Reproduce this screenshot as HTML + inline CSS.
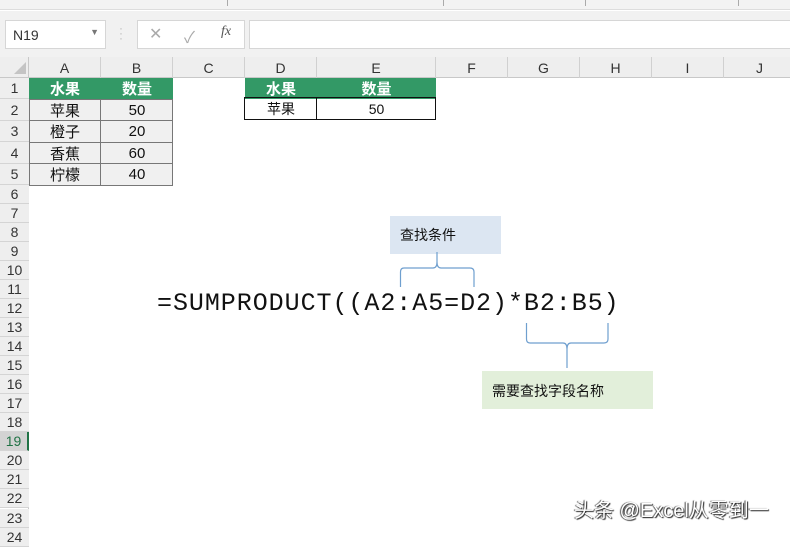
<!DOCTYPE html>
<html><head><meta charset="utf-8"><style>
*{margin:0;padding:0;box-sizing:border-box}
body{width:790px;height:534px;overflow:hidden;background:#fff;position:relative;font-family:"Liberation Sans","Noto Sans CJK SC",sans-serif}
.a{position:absolute}
.cell{position:absolute;display:flex;align-items:center;justify-content:center;font-size:15px;color:#111}
.ch{position:absolute;top:57px;height:21px;display:flex;align-items:center;justify-content:center;font-size:14px;color:#333;border-right:1px solid #d0d0d0}
.rh{position:absolute;left:0;width:29px;display:flex;align-items:center;justify-content:center;font-size:14px;color:#333;border-bottom:1px solid #d4d4d4;background:#eeeeee}
</style></head><body>
<div class="a" style="left:0;top:0;width:790px;height:10px;background:#f3f3f3;border-bottom:1px solid #ddd"></div>
<div class="a" style="left:227px;top:0;width:1px;height:6px;background:#aaa"></div>
<div class="a" style="left:443px;top:0;width:1px;height:6px;background:#aaa"></div>
<div class="a" style="left:585px;top:0;width:1px;height:6px;background:#aaa"></div>
<div class="a" style="left:738px;top:0;width:1px;height:6px;background:#aaa"></div>
<div class="a" style="left:0;top:11px;width:790px;height:46px;background:#f1f1f1"></div>
<div class="a" style="left:5px;top:20px;width:101px;height:29px;background:#fff;border:1px solid #d6d6d6;font-size:14px;color:#333;padding:6px 0 0 7px">N19<span style="position:absolute;right:6px;top:6px;font-size:9px;color:#777">▼</span></div>
<div class="a" style="left:119px;top:26px;font-size:12px;color:#bbb;line-height:5px">·<br>·<br>·</div>
<div class="a" style="left:137px;top:20px;width:108px;height:29px;background:#fff;border:1px solid #d6d6d6"></div>
<div class="a" style="left:149px;top:24px;font-size:16px;color:#aaa">✕</div>
<div class="a" style="left:184px;top:24px;font-size:16px;color:#aaa">✓</div>
<div class="a" style="left:221px;top:24px;font-size:14px;color:#555;font-style:italic;font-family:'Liberation Serif',serif">fx</div>
<div class="a" style="left:249px;top:20px;width:545px;height:29px;background:#fff;border:1px solid #d6d6d6"></div>
<div class="a" style="left:0;top:57px;width:790px;height:21px;background:#eeeeee;border-bottom:1px solid #c8c8c8"></div>
<div class="a" style="left:14px;top:62px;width:0;height:0;border-left:12px solid transparent;border-bottom:12px solid #c4c4c4"></div>
<div class="ch" style="left:29px;width:72px">A</div>
<div class="ch" style="left:101px;width:72px">B</div>
<div class="ch" style="left:173px;width:72px">C</div>
<div class="ch" style="left:245px;width:72px">D</div>
<div class="ch" style="left:317px;width:119px">E</div>
<div class="ch" style="left:436px;width:72px">F</div>
<div class="ch" style="left:508px;width:72px">G</div>
<div class="ch" style="left:580px;width:72px">H</div>
<div class="ch" style="left:652px;width:72px">I</div>
<div class="ch" style="left:724px;width:72px">J</div>
<div class="a" style="left:28px;top:57px;width:1px;height:477px;background:#c8c8c8"></div>
<div class="rh" style="top:78px;height:21px">1</div>
<div class="rh" style="top:99px;height:22px">2</div>
<div class="rh" style="top:121px;height:21px">3</div>
<div class="rh" style="top:142px;height:22px">4</div>
<div class="rh" style="top:164px;height:21px">5</div>
<div class="rh" style="top:185px;height:19px">6</div>
<div class="rh" style="top:204px;height:19px">7</div>
<div class="rh" style="top:223px;height:19px">8</div>
<div class="rh" style="top:242px;height:19px">9</div>
<div class="rh" style="top:261px;height:19px">10</div>
<div class="rh" style="top:280px;height:19px">11</div>
<div class="rh" style="top:299px;height:19px">12</div>
<div class="rh" style="top:318px;height:19px">13</div>
<div class="rh" style="top:337px;height:19px">14</div>
<div class="rh" style="top:356px;height:19px">15</div>
<div class="rh" style="top:375px;height:19px">16</div>
<div class="rh" style="top:394px;height:19px">17</div>
<div class="rh" style="top:413px;height:19px">18</div>
<div class="rh" style="top:432px;height:19px;background:#d3d3d3;color:#217346;border-right:2px solid #217346">19</div>
<div class="rh" style="top:451px;height:19px">20</div>
<div class="rh" style="top:470px;height:19px">21</div>
<div class="rh" style="top:489px;height:19px">22</div>
<div class="rh" style="top:509px;height:19px">23</div>
<div class="rh" style="top:528px;height:19px">24</div>

<div class="a" style="left:29px;top:78px;width:144px;height:21px;background:#339966"></div>
<div class="cell" style="left:29px;top:78px;width:72px;height:21px;color:#fff;font-weight:bold">水果</div>
<div class="cell" style="left:101px;top:78px;width:72px;height:21px;color:#fff;font-weight:bold">数量</div>
<div class="a" style="left:29px;top:99px;width:144px;height:87px;background:#f0f0f0;border:1px solid #777"></div>
<div class="a" style="left:100px;top:99px;width:1px;height:87px;background:#777"></div>
<div class="a" style="left:29px;top:120px;width:144px;height:1px;background:#777"></div>
<div class="a" style="left:29px;top:142px;width:144px;height:1px;background:#777"></div>
<div class="a" style="left:29px;top:163px;width:144px;height:1px;background:#777"></div>
<div class="cell" style="left:29px;top:99px;width:72px;height:22px">苹果</div>
<div class="cell" style="left:101px;top:99px;width:72px;height:22px">50</div>
<div class="cell" style="left:29px;top:121px;width:72px;height:21px">橙子</div>
<div class="cell" style="left:101px;top:121px;width:72px;height:21px">20</div>
<div class="cell" style="left:29px;top:142px;width:72px;height:22px">香蕉</div>
<div class="cell" style="left:101px;top:142px;width:72px;height:22px">60</div>
<div class="cell" style="left:29px;top:164px;width:72px;height:21px">柠檬</div>
<div class="cell" style="left:101px;top:164px;width:72px;height:21px">40</div>

<div class="a" style="left:245px;top:78px;width:191px;height:21px;background:#339966"></div>
<div class="cell" style="left:245px;top:78px;width:72px;height:21px;color:#fff;font-weight:bold">水果</div>
<div class="cell" style="left:317px;top:78px;width:119px;height:21px;color:#fff;font-weight:bold">数量</div>
<div class="a" style="left:244px;top:97px;width:192px;height:23px;border:1px solid #111"></div>
<div class="a" style="left:316px;top:97px;width:1px;height:23px;background:#111"></div>
<div class="cell" style="left:245px;top:98px;width:72px;height:22px;font-size:14px">苹果</div>
<div class="cell" style="left:317px;top:98px;width:119px;height:22px;font-size:14px">50</div>

<div class="a" style="left:390px;top:216px;width:111px;height:38px;background:#dce6f2;font-size:14px;color:#111;padding:9px 0 0 10px">查找条件</div>
<div class="a" style="left:482px;top:371px;width:171px;height:38px;background:#e2efda;font-size:14px;color:#111;padding:10px 0 0 10px">需要查找字段名称</div>
<svg class="a" style="left:0;top:0" width="790" height="534">
<path d="M400.5 287 V272 Q400.5 268 404 268 H433 Q437 268 437 262 V252 M437 262 Q437 268 441 268 H470 Q474 268 474 272 V287" fill="none" stroke="#6f9fcf" stroke-width="1.2"/>
<path d="M526.5 323 V339 Q526.5 343 530 343 H563 Q567 343 567 349 V368 M567 349 Q567 343 571 343 H604 Q608 343 608 339 V323" fill="none" stroke="#6f9fcf" stroke-width="1.2"/>
</svg>
<div class="a" style="left:157px;top:289px;font-family:'Liberation Mono',monospace;font-size:25px;letter-spacing:0.95px;color:#111;white-space:nowrap">=SUMPRODUCT((A2:A5=D2)*B2:B5)</div>
<div class="a" style="left:574px;top:494px;font-size:20px;color:#fff;text-shadow:1px 1px 1px #222,-1px 0 1px #444;white-space:nowrap">头条 @Excel从零到一</div>
</body></html>
